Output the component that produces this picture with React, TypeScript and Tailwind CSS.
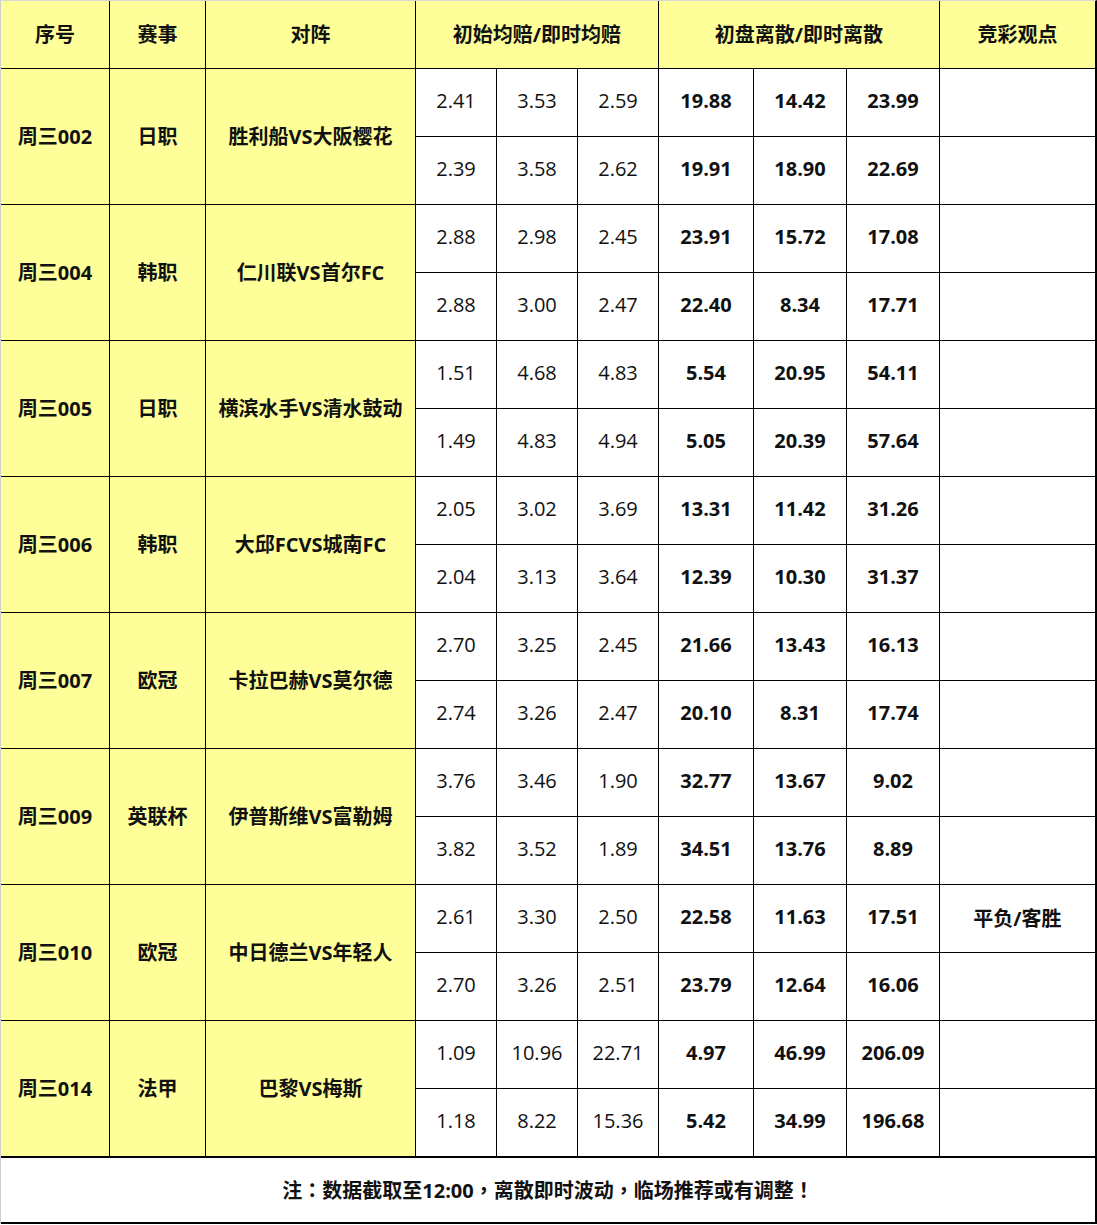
import React from "react";

type Match = {
  id: string;
  league: string;
  teams: string;
  rows: { odds: string[]; disp: string[]; view?: string }[];
};

const matches: Match[] = [
  { id: "周三002", league: "日职", teams: "胜利船VS大阪樱花", rows: [
    { odds: ["2.41", "3.53", "2.59"], disp: ["19.88", "14.42", "23.99"] },
    { odds: ["2.39", "3.58", "2.62"], disp: ["19.91", "18.90", "22.69"] },
  ] },
  { id: "周三004", league: "韩职", teams: "仁川联VS首尔FC", rows: [
    { odds: ["2.88", "2.98", "2.45"], disp: ["23.91", "15.72", "17.08"] },
    { odds: ["2.88", "3.00", "2.47"], disp: ["22.40", "8.34", "17.71"] },
  ] },
  { id: "周三005", league: "日职", teams: "横滨水手VS清水鼓动", rows: [
    { odds: ["1.51", "4.68", "4.83"], disp: ["5.54", "20.95", "54.11"] },
    { odds: ["1.49", "4.83", "4.94"], disp: ["5.05", "20.39", "57.64"] },
  ] },
  { id: "周三006", league: "韩职", teams: "大邱FCVS城南FC", rows: [
    { odds: ["2.05", "3.02", "3.69"], disp: ["13.31", "11.42", "31.26"] },
    { odds: ["2.04", "3.13", "3.64"], disp: ["12.39", "10.30", "31.37"] },
  ] },
  { id: "周三007", league: "欧冠", teams: "卡拉巴赫VS莫尔德", rows: [
    { odds: ["2.70", "3.25", "2.45"], disp: ["21.66", "13.43", "16.13"] },
    { odds: ["2.74", "3.26", "2.47"], disp: ["20.10", "8.31", "17.74"] },
  ] },
  { id: "周三009", league: "英联杯", teams: "伊普斯维VS富勒姆", rows: [
    { odds: ["3.76", "3.46", "1.90"], disp: ["32.77", "13.67", "9.02"] },
    { odds: ["3.82", "3.52", "1.89"], disp: ["34.51", "13.76", "8.89"] },
  ] },
  { id: "周三010", league: "欧冠", teams: "中日德兰VS年轻人", rows: [
    { odds: ["2.61", "3.30", "2.50"], disp: ["22.58", "11.63", "17.51"], view: "平负/客胜" },
    { odds: ["2.70", "3.26", "2.51"], disp: ["23.79", "12.64", "16.06"] },
  ] },
  { id: "周三014", league: "法甲", teams: "巴黎VS梅斯", rows: [
    { odds: ["1.09", "10.96", "22.71"], disp: ["4.97", "46.99", "206.09"] },
    { odds: ["1.18", "8.22", "15.36"], disp: ["5.42", "34.99", "196.68"] },
  ] },
];

const font = { fontFamily: '"Open Sans", "Noto Sans CJK SC", sans-serif' };

function P({ c }: { c: string }) {
  return <span className="font-['Noto_Sans_CJK_TC',sans-serif]">{c}</span>;
}

export default function App() {
  const cells: React.ReactNode[] = [];
  matches.forEach((m, mi) => {
    m.rows.forEach((r, ri) => {
      if (ri === 0) {
        cells.push(
          <div key={`id${mi}`} className="row-span-2 bg-[#ffff99] flex items-center justify-center font-bold text-[20px]">{m.id}</div>,
          <div key={`lg${mi}`} className="row-span-2 bg-[#ffff99] flex items-center justify-center font-bold text-[20px]">{m.league}</div>,
          <div key={`tm${mi}`} className="row-span-2 bg-[#ffff99] flex items-center justify-center font-bold text-[20px]">{m.teams}</div>
        );
      }
      r.odds.forEach((o, oi) => {
        cells.push(
          <div key={`o${mi}-${ri}-${oi}`} className="h-[67px] pb-[3px] bg-white flex items-center justify-center text-[20px] text-[#111]">{o}</div>
        );
      });
      r.disp.forEach((d, di) => {
        cells.push(
          <div key={`d${mi}-${ri}-${di}`} className="h-[67px] pb-[3px] bg-white flex items-center justify-center font-bold text-[20px]">{d}</div>
        );
      });
      cells.push(
        <div key={`v${mi}-${ri}`} className="h-[67px] bg-white flex items-center justify-center font-bold text-[20px]">{r.view ?? ""}</div>
      );
    });
  });

  return (
    <div className="w-[1097px] h-[1225px] bg-white text-[#111]" style={font}>
      <div className="border-l border-t border-l-[#cfcfcf] border-t-[#d8d8d8] border-r-2 border-r-black">
        <div className="grid grid-cols-[108px_95px_209px_80px_80px_80px_94px_92px_92px_155px] gap-px bg-black">
          <div className="h-[67px] bg-[#ffff99] flex items-center justify-center font-bold text-[20px]">序号</div>
          <div className="h-[67px] bg-[#ffff99] flex items-center justify-center font-bold text-[20px]">赛事</div>
          <div className="h-[67px] bg-[#ffff99] flex items-center justify-center font-bold text-[20px]">对阵</div>
          <div className="col-span-3 h-[67px] bg-[#ffff99] flex items-center justify-center font-bold text-[20px]">初始均赔/即时均赔</div>
          <div className="col-span-3 h-[67px] bg-[#ffff99] flex items-center justify-center font-bold text-[20px]">初盘离散/即时离散</div>
          <div className="h-[67px] bg-[#ffff99] flex items-center justify-center font-bold text-[20px]">竞彩观点</div>
          {cells}
        </div>
        <div className="border-t-2 border-t-black border-b-2 border-b-black h-[68px] flex items-center justify-center font-bold text-[20px] bg-white">
          <span>注<P c="：" />数据截取至12:00<P c="，" />离散即时波动<P c="，" />临场推荐或有调整<P c="！" /></span>
        </div>
      </div>
    </div>
  );
}
